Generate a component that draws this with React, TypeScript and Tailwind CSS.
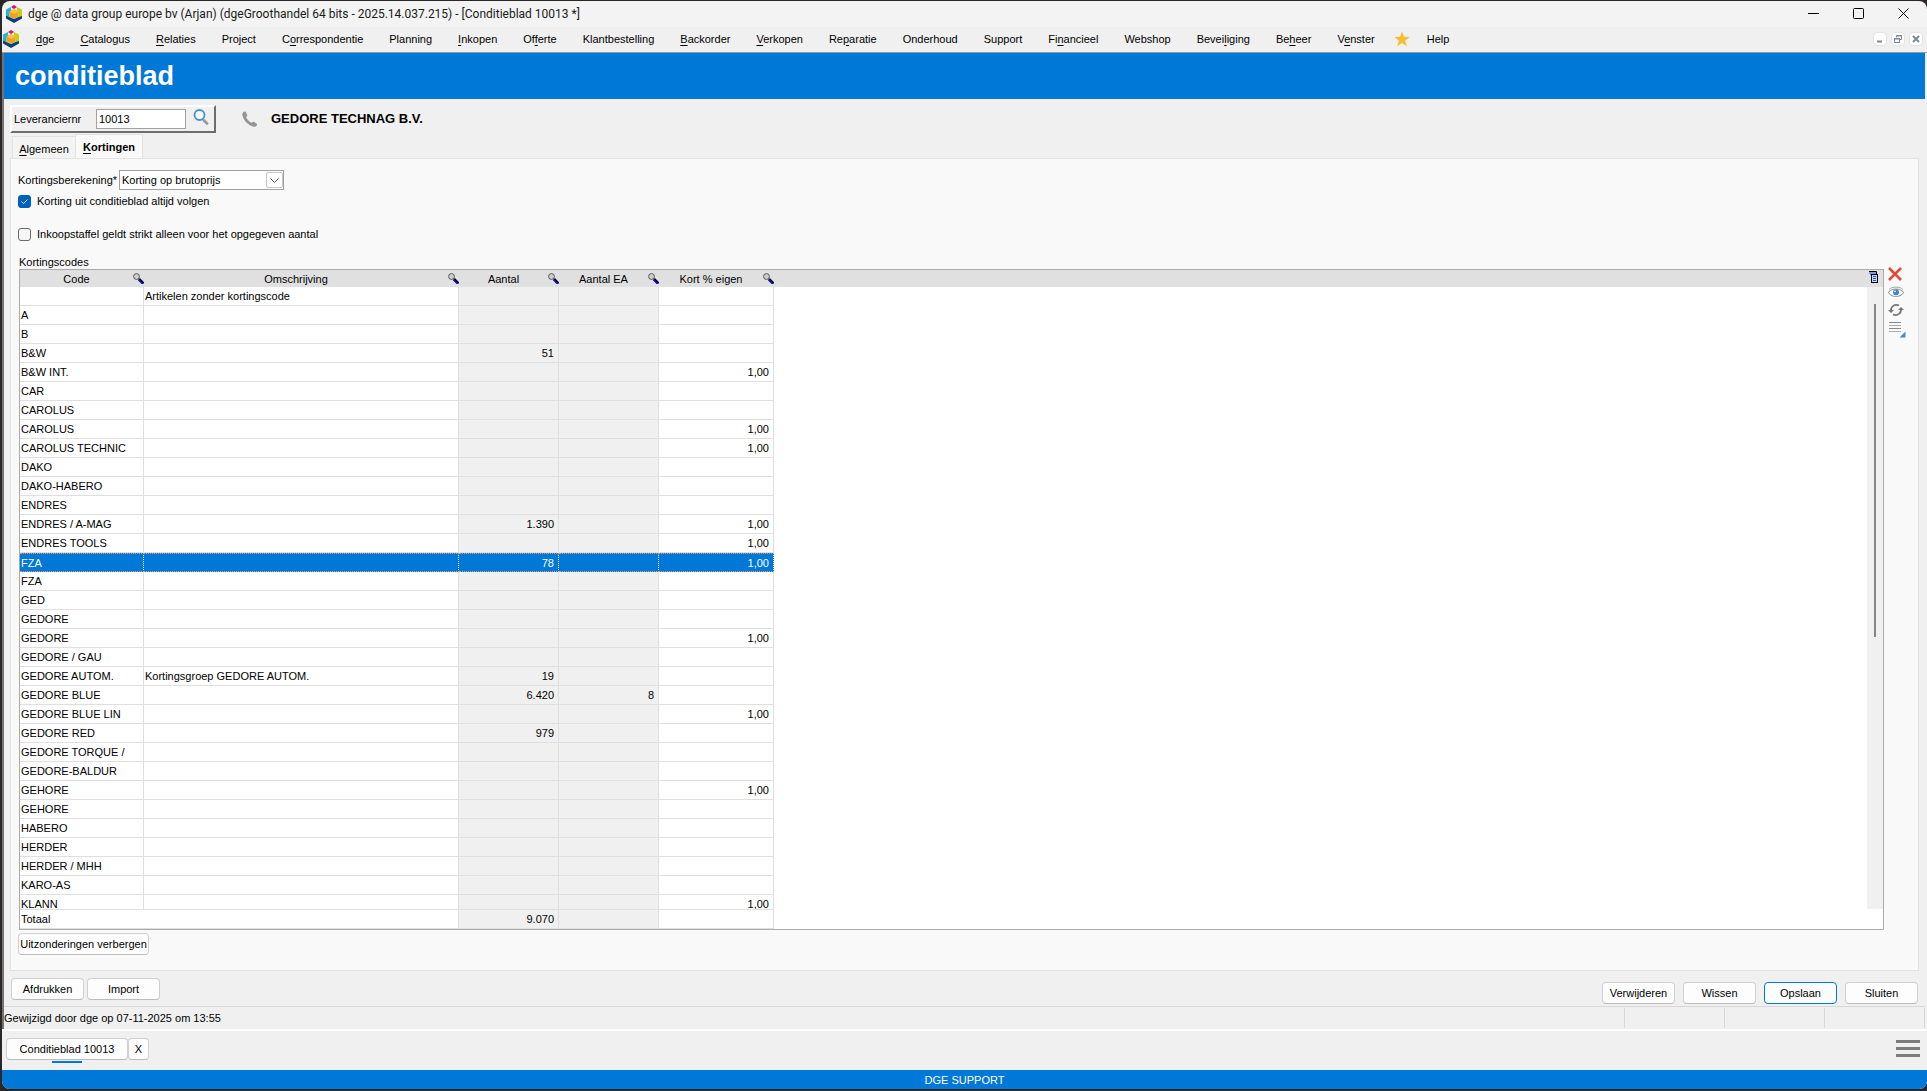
import { useState, type ReactNode } from "react";

// ─── Data ────────────────────────────────────────────────────────────────────

interface MenuEntry {
  label: string;
  at?: number; // index of the underlined shortcut letter
}

const MENU: MenuEntry[] = [
  { label: "dge", at: 0 },
  { label: "Catalogus", at: 0 },
  { label: "Relaties", at: 0 },
  { label: "Project" },
  { label: "Correspondentie", at: 1 },
  { label: "Planning" },
  { label: "Inkopen", at: 0 },
  { label: "Offerte", at: 2 },
  { label: "Klantbestelling" },
  { label: "Backorder", at: 0 },
  { label: "Verkopen", at: 0 },
  { label: "Reparatie", at: 2 },
  { label: "Onderhoud" },
  { label: "Support" },
  { label: "Financieel", at: 2 },
  { label: "Webshop" },
  { label: "Beveiliging", at: 5 },
  { label: "Beheer", at: 2 },
  { label: "Venster", at: 1 },
];

interface Row {
  code: string;
  desc?: string;
  qty?: string;
  qtyEa?: string;
  pct?: string;
}

const ROWS: Row[] = [
  { code: "", desc: "Artikelen zonder kortingscode" },
  { code: "A" },
  { code: "B" },
  { code: "B&W", qty: "51" },
  { code: "B&W INT.", pct: "1,00" },
  { code: "CAR" },
  { code: "CAROLUS" },
  { code: "CAROLUS", pct: "1,00" },
  { code: "CAROLUS TECHNIC", pct: "1,00" },
  { code: "DAKO" },
  { code: "DAKO-HABERO" },
  { code: "ENDRES" },
  { code: "ENDRES / A-MAG", qty: "1.390", pct: "1,00" },
  { code: "ENDRES TOOLS", pct: "1,00" },
  { code: "FZA", qty: "78", pct: "1,00" },
  { code: "FZA" },
  { code: "GED" },
  { code: "GEDORE" },
  { code: "GEDORE", pct: "1,00" },
  { code: "GEDORE / GAU" },
  { code: "GEDORE AUTOM.", desc: "Kortingsgroep GEDORE AUTOM.", qty: "19" },
  { code: "GEDORE BLUE", qty: "6.420", qtyEa: "8" },
  { code: "GEDORE BLUE LIN", pct: "1,00" },
  { code: "GEDORE RED", qty: "979" },
  { code: "GEDORE TORQUE /" },
  { code: "GEDORE-BALDUR" },
  { code: "GEHORE", pct: "1,00" },
  { code: "GEHORE" },
  { code: "HABERO" },
  { code: "HERDER" },
  { code: "HERDER / MHH" },
  { code: "KARO-AS" },
  { code: "KLANN", pct: "1,00" },
];

const COLUMNS = ["Code", "Omschrijving", "Aantal", "Aantal EA", "Kort % eigen"];

// ─── Icons ───────────────────────────────────────────────────────────────────

function Logo() {
  return (
    <svg viewBox="0 0 16 18" className="h-[18px] w-4 shrink-0" aria-hidden="true">
      <path d="M0 4.5 5 2v4L3.5 8v4L0 10.5z" fill="#1db4e4" />
      <path d="M5 2 8 0l3 2-3 2z" fill="#d5127e" />
      <path d="M11 2l5 2.500V11l-3.500 1V7L11 5.500z" fill="#c5cf10" />
      <path d="M0 10.500 3.500 12 8 14l4.500-2L16 11v2.500L8 18 0 13.500z" fill="#0a3f7a" />
      <path d="M8 4l4.500 2.500v5L8 14l-4.500-2.500v-5z" fill="#f2a01e" />
      <path d="M8 4l4.500 2.500L8 9 3.500 6.500z" fill="#fbc43a" />
    </svg>
  );
}

function FilterIcon() {
  return (
    <svg viewBox="0 0 11 11" className="h-[11px] w-[11px] shrink-0" aria-hidden="true">
      <path d="M6 6l4.500 4.500" stroke="#000" strokeWidth="2.600" />
      <path d="M5.500 6.800l4.300 4.200" stroke="#1111ee" strokeWidth="1.600" />
      <circle cx="3.500" cy="3.500" r="2.900" fill="#d0d0d0" stroke="#555" strokeWidth="1" />
    </svg>
  );
}

function SearchIcon() {
  return (
    <svg viewBox="0 0 16 16" className="size-4" aria-hidden="true">
      <path d="M11 11.500l3 3" stroke="#9a9a9a" strokeWidth="2.800" strokeLinecap="round" />
      <circle cx="6.500" cy="6" r="5" fill="#f6fafd" stroke="#4a8fc7" strokeWidth="1.800" />
    </svg>
  );
}

function PhoneIcon() {
  return (
    <svg viewBox="0 0 16 16" className="size-4" fill="#959595" aria-hidden="true">
      <path d="M1 1.500C1.800.6 3 .2 3.600.8L5.300 4c.2.500-.1 1-.7 1.500-.5.400-.5.700-.2 1.200 1.200 2.100 2.600 3.600 4.700 4.900.5.300.8.200 1.200-.3.500-.600 1-.8 1.500-.5l3 2c.6.500.1 1.600-.8 2.400-1 .8-2.600.8-4.600-.1C5.600 13.300 2.100 9.600.8 5.800.2 4 .2 2.500 1 1.500z" />
    </svg>
  );
}

function CopyIcon() {
  return (
    <svg viewBox="0 0 10 12" className="h-3 w-[10px]" aria-hidden="true">
      <path d="M0 .5h7.500V3" fill="none" stroke="#000" />
      <path d="M0 2h7M1 3.500h1" stroke="#6c80e8" strokeWidth="1.500" />
      <rect x="2.500" y="3.500" width="6" height="8" fill="#c9d4ff" stroke="#000" />
      <path d="M4 5.500h3M4 7.500h3M4 9.500h3" stroke="#3344cc" />
    </svg>
  );
}

function DeleteIcon() {
  return (
    <svg viewBox="0 0 14 14" className="size-[14px]" aria-hidden="true">
      <path d="M1 1l12 12M13 1L1 13" stroke="#e04a3a" strokeWidth="2.600" />
    </svg>
  );
}

function EyeIcon() {
  return (
    <svg viewBox="0 0 16 12" className="h-3 w-4" aria-hidden="true">
      <path d="M.5 6.500C4 1.800 12 1.800 15.500 6.500 12 11.800 4 11.800.5 6.500z" fill="#fff" stroke="#9a9a9a" strokeWidth="1.100" />
      <path d="M1 3.500C4 .3 12 .3 15 3.500" fill="none" stroke="#a5a5a5" />
      <circle cx="8" cy="6.300" r="3" fill="#3c85c2" />
      <circle cx="7" cy="5.300" r=".9" fill="#fff" />
    </svg>
  );
}

function RefreshIcon() {
  return (
    <svg viewBox="0 0 16 14" className="h-[14px] w-4" fill="none" aria-hidden="true">
      <path d="M3 8C2.500 4 6 .8 11 2.400" stroke="#777" strokeWidth="1.700" />
      <path d="M13 6c.5 4-3 7.200-8 5.600" stroke="#777" strokeWidth="1.700" />
      <path d="M0 7h6L3 10z" fill="#777" />
      <path d="M10 7h6l-3-3z" fill="#777" />
    </svg>
  );
}

function ListIcon() {
  return (
    <svg viewBox="0 0 18 16" className="h-4 w-[18px]" aria-hidden="true">
      <path d="M1 .5h12M1 6.500h12" stroke="#8a8a8a" />
      <path d="M1 3.500h12M1 9.500h12" stroke="#aaa" />
      <path d="M17.500 9.500V15.500H11.500z" fill="#4a8ac0" />
    </svg>
  );
}

// ─── Small parts ─────────────────────────────────────────────────────────────

function Mnemonic({ label, at }: MenuEntry) {
  if (at === undefined) return <>{label}</>;
  return (
    <>
      {label.slice(0, at)}
      <u className="underline-offset-2">{label[at]}</u>
      {label.slice(at + 1)}
    </>
  );
}

function PushButton({ children, primary }: { children: ReactNode; primary?: boolean }) {
  return (
    <button
      type="button"
      className={`h-[22px] w-[73px] rounded border bg-[#fdfdfd] ${
        primary ? "border-[#0078d7]" : "border-[#d0d0d0] border-b-[#bcbcbc]"
      }`}
    >
      {children}
    </button>
  );
}

function CheckBox({ label, initial = false }: { label: string; initial?: boolean }) {
  const [checked, setChecked] = useState(initial);
  return (
    <label className="flex w-fit items-center gap-[6px]">
      <span className="relative size-[13px]">
        <input
          type="checkbox"
          checked={checked}
          onChange={(e) => setChecked(e.target.checked)}
          className="block size-[13px] appearance-none rounded-[3px] border border-[#6b6b6b] bg-[#f6f6f6] checked:border-[#005fb8] checked:bg-[#005fb8]"
        />
        {checked && (
          <svg viewBox="0 0 13 13" className="pointer-events-none absolute inset-0 size-[13px]" aria-hidden="true">
            <path d="M3.500 6.500l2 2.200 4-4.200" fill="none" stroke="#cfe3f5" strokeWidth="1" />
          </svg>
        )}
      </span>
      {label}
    </label>
  );
}

function Columns() {
  return (
    <colgroup>
      <col className="w-[124px]" />
      <col className="w-[315px]" />
      <col className="w-[100px]" />
      <col className="w-[100px]" />
      <col className="w-[115px]" />
      <col />
    </colgroup>
  );
}

// ─── Window chrome ───────────────────────────────────────────────────────────

function TitleBar() {
  return (
    <header className="flex h-[26px] items-center gap-[6px] rounded-t-lg bg-[#f3f3f3] pr-[18px] pb-px pl-1">
      <Logo />
      <h1 className="flex-1 font-[Roboto] text-[12px] text-[#1a1a1a]">
        dge @ data group europe bv (Arjan) (dgeGroothandel 64 bits - 2025.14.037.215) - [Conditieblad 10013 *]
      </h1>
      <div className="flex gap-[34px]">
        <button type="button" aria-label="Minimaliseren">
          <svg viewBox="0 0 11 11" className="size-[11px]" fill="none" stroke="#000">
            <path d="M0 5.500h11" />
          </svg>
        </button>
        <button type="button" aria-label="Maximaliseren">
          <svg viewBox="0 0 11 11" className="size-[11px]" fill="none" stroke="#000">
            <rect x=".5" y=".5" width="10" height="10" rx="1" />
          </svg>
        </button>
        <button type="button" aria-label="Afsluiten">
          <svg viewBox="0 0 11 11" className="size-[11px]" fill="none" stroke="#000">
            <path d="M.5.5l10 10M10.500.5l-10 10" />
          </svg>
        </button>
      </div>
    </header>
  );
}

function MenuBar() {
  const mdi = "flex size-[14px] items-center justify-center rounded-sm border border-[#e2e2e2] bg-white";
  return (
    <nav className="flex h-[26px] items-center border-b border-[#9a9a9a] pr-1 pb-[2px] pl-px">
      <Logo />
      <div className="flex items-center gap-[26px] pl-[17px] whitespace-nowrap">
        {MENU.map((entry) => (
          <button key={entry.label} type="button">
            <Mnemonic {...entry} />
          </button>
        ))}
      </div>
      <div className="flex flex-1 items-center gap-[17px] pl-[19px]">
        <svg viewBox="0 0 16 16" className="size-4" aria-hidden="true">
          <path d="M8 .5l2 5.300 5.700.2-4.500 3.500 1.600 5.700L8 12l-4.800 3.200 1.600-5.700L.3 6 6 5.800z" fill="#f7bd33" />
        </svg>
        <button type="button">Help</button>
      </div>
      <div className="flex gap-[4px]">
        <button type="button" aria-label="Venster minimaliseren" className={mdi}>
          <svg viewBox="0 0 8 8" className="size-2"><path d="M1 6.500h5" stroke="#7a8896" strokeWidth="2" /></svg>
        </button>
        <button type="button" aria-label="Venster herstellen" className={mdi}>
          <svg viewBox="0 0 8 8" className="size-2" fill="none" stroke="#7a8896">
            <path d="M2.500 2.500V.5h5v4h-2M2 1h6M0 4h6" />
            <rect x=".5" y="3.500" width="5" height="4" />
          </svg>
        </button>
        <button type="button" aria-label="Venster sluiten" className={mdi}>
          <svg viewBox="0 0 8 8" className="size-2"><path d="M1 1l6 6M7 1L1 7" stroke="#7a8896" strokeWidth="2" /></svg>
        </button>
      </div>
    </nav>
  );
}

// ─── Discount table ──────────────────────────────────────────────────────────

function DiscountTable() {
  const [selected, setSelected] = useState(14);

  return (
    <div className="flex min-h-0 flex-1 flex-col border border-[#a9a9ae] bg-white">
      <div className="flex min-h-0 flex-1">
        <div className="min-w-0 flex-1 overflow-hidden">
          <table className="w-full table-fixed border-separate border-spacing-0" aria-labelledby="codes-title">
            <Columns />
            <thead>
              <tr className="bg-[#e0e0e0]">
                {COLUMNS.map((name) => (
                  <th key={name} className="h-[17px] p-0 font-normal">
                    <span className="flex items-center">
                      <span className="flex-1">{name}</span>
                      <FilterIcon />
                    </span>
                  </th>
                ))}
                <td />
              </tr>
            </thead>
            <tbody>
              {ROWS.map((row, i) => {
                const active = i === selected;
                const cell = active
                  ? "h-[19px] border-y border-r border-y-[#e39a63] border-r-white border-dotted bg-[#0078d7] p-0 text-white"
                  : "h-[19px] border-b border-r border-[#dfdfdf] p-0";
                const shade = active ? "" : "bg-[#f0f0f0]";
                return (
                  <tr key={i} onClick={() => setSelected(i)}>
                    <td className={`${cell} pl-px whitespace-nowrap`}>{row.code}</td>
                    <td className={`${cell} pl-px`}>{row.desc}</td>
                    <td className={`${cell} ${shade} pr-1 text-right`}>{row.qty}</td>
                    <td className={`${cell} ${shade} pr-1 text-right`}>{row.qtyEa}</td>
                    <td className={`${cell} pr-1 text-right`}>{row.pct}</td>
                    <td />
                  </tr>
                );
              })}
            </tbody>
          </table>
        </div>

        {/* Scroll bar */}
        <div className="flex w-4 flex-col bg-[#f0f0f0]">
          <div className="h-[17px] bg-[#e0e0e0] pt-px pl-[2px]">
            <button type="button" aria-label="Kolommen" className="block">
              <CopyIcon />
            </button>
          </div>
          <div className="flex-1 pt-[17px] pl-[7px]">
            <div className="h-[55%] w-[2px] bg-[#858585]" />
          </div>
        </div>
      </div>

      {/* Totals stay put below the scrolling rows */}
      <table className="w-full table-fixed border-separate border-spacing-0" aria-label="Totaal">
        <Columns />
        <tbody>
          <tr>
            <td colSpan={2} className="h-5 border-y border-r border-[#dfdfdf] p-0 pl-px">Totaal</td>
            <td className="border-y border-r border-[#dfdfdf] bg-[#f0f0f0] p-0 pr-1 text-right">9.070</td>
            <td className="border-y border-r border-[#dfdfdf] bg-[#f0f0f0] p-0" />
            <td className="border-y border-r border-[#dfdfdf] p-0" />
            <td />
          </tr>
        </tbody>
      </table>
    </div>
  );
}

// ─── Page ────────────────────────────────────────────────────────────────────

export default function App() {
  const [supplier, setSupplier] = useState("10013");

  return (
    <div className="flex h-screen flex-col bg-[#2a2728] pt-px pb-[2px] pl-[2px] font-['Liberation_Sans',sans-serif] text-[11px] leading-[14px] text-black">
      <TitleBar />

      <div className="flex min-h-0 flex-1 flex-col rounded-b-lg bg-[#f0f0f0]">
        <MenuBar />

        <main className="mr-[2px] flex min-h-0 flex-1 flex-col border-l-2 border-[#77716f]">
          <h2 className="flex h-[46px] items-center bg-[#0078d7] pl-[11px] text-[27px] font-bold text-white">
            conditieblad
          </h2>

          {/* Supplier search */}
          <div className="flex items-center gap-[26px] pt-[6px] pl-[6px]">
            <div className="flex h-[28px] w-[206px] items-center border-2 border-t-white border-l-white border-r-[#6d6d6d] border-b-[#6d6d6d] pl-[2px]">
              <label htmlFor="supplier" className="w-[82px]">Leveranciernr</label>
              <input
                id="supplier"
                value={supplier}
                onChange={(e) => setSupplier(e.target.value)}
                className="h-5 w-[90px] border border-[#a0a0a5] bg-white px-[2px]"
              />
              <button type="button" aria-label="Zoeken" className="pb-1 pl-[7px]">
                <SearchIcon />
              </button>
            </div>
            <div className="flex items-center gap-[13px]">
              <PhoneIcon />
              <strong className="text-[13px]">GEDORE TECHNAG B.V.</strong>
            </div>
          </div>

          {/* Tabs */}
          <div role="tablist" className="flex items-end pt-px pl-2">
            <button type="button" role="tab" aria-selected="false" className="h-[22px] w-[63px] border border-r-0 border-b-0 border-[#e2e2e2] bg-[#f3f3f3] pt-[2px]">
              <Mnemonic label="Algemeen" at={0} />
            </button>
            <button type="button" role="tab" aria-selected="true" className="-mb-px h-[25px] w-[68px] border border-b-0 border-[#e2e2e2] bg-[#f9f9f9] font-bold">
              <Mnemonic label="Kortingen" at={0} />
            </button>
          </div>

          {/* Tab page */}
          <section className="mr-[6px] ml-[6px] flex min-h-0 flex-1 flex-col border border-[#e2e2e2] bg-[#f9f9f9] pt-[11px] pb-[15px] pl-[7px]">
            <div className="flex items-center">
              <label htmlFor="calc" className="w-[101px]">Kortingsberekening*</label>
              <div className="relative">
                <select id="calc" className="block h-5 w-[165px] appearance-none border border-[#a0a0a5] bg-white pl-[2px]">
                  <option>Korting op brutoprijs</option>
                </select>
                <span className="pointer-events-none absolute top-[2px] right-px flex h-4 w-[17px] items-center justify-center rounded-[2px] border border-[#c4c4c4] bg-white">
                  <svg viewBox="0 0 9 5" className="h-[5px] w-[9px]" fill="none" stroke="#555">
                    <path d="M.5.5l4 4 4-4" />
                  </svg>
                </span>
              </div>
            </div>

            <div className="flex flex-col gap-[19px] pt-1">
              <CheckBox label="Korting uit conditieblad altijd volgen" initial />
              <CheckBox label="Inkoopstaffel geldt strikt alleen voor het opgegeven aantal" />
            </div>

            <h3 id="codes-title" className="pt-[14px] pl-px">Kortingscodes</h3>

            <div className="flex min-h-0 flex-1 pl-px">
              <DiscountTable />
              <div className="-mt-[2px] flex w-[34px] flex-col items-start gap-[5px] pl-1">
                <button type="button" aria-label="Verwijderen"><DeleteIcon /></button>
                <button type="button" aria-label="Bekijken"><EyeIcon /></button>
                <button type="button" aria-label="Vernieuwen"><RefreshIcon /></button>
                <button type="button" aria-label="Lijst"><ListIcon /></button>
              </div>
            </div>

            <button type="button" className="mt-[3px] h-[22px] w-[131px] rounded border border-[#d0d0d0] border-b-[#bcbcbc] bg-[#fdfdfd] whitespace-nowrap">
              Uitzonderingen verbergen
            </button>
          </section>

          {/* Actions */}
          <div className="flex h-[35px] items-start justify-between pt-[7px] pr-[7px] pl-[7px]">
            <div className="flex gap-[3px]">
              <PushButton>Afdrukken</PushButton>
              <PushButton>Import</PushButton>
            </div>
            <div className="flex gap-2 pt-1">
              <PushButton>Verwijderen</PushButton>
              <PushButton>Wissen</PushButton>
              <PushButton primary>Opslaan</PushButton>
              <PushButton>Sluiten</PushButton>
            </div>
          </div>

          {/* Status bar */}
          <div className="flex h-[23px] items-center justify-between border-t border-[#d7d7d7]">
            <p>Gewijzigd door dge op 07-11-2025 om 13:55</p>
            <div className="flex h-5">
              <span className="w-[100px] border-l border-[#d7d7d7]" />
              <span className="w-[100px] border-l border-[#d7d7d7]" />
              <span className="w-[101px] border-x border-[#d7d7d7]" />
            </div>
          </div>
        </main>

        {/* Open windows */}
        <div className="flex h-[41px] items-start justify-between border-t-2 border-white pt-[7px] pr-[7px] pl-1">
          <div className="flex">
            <div className="flex flex-col items-center gap-px">
              <button type="button" className="h-[22px] w-[122px] rounded border border-[#d0d0d0] border-b-[#bcbcbc] bg-[#fdfdfd]">
                Conditieblad 10013
              </button>
              <span className="h-[2px] w-[30px] bg-[#0078d7]" />
            </div>
            <button type="button" aria-label="Tabblad sluiten" className="h-[22px] w-[21px] rounded border border-[#d0d0d0] border-b-[#bcbcbc] bg-[#fdfdfd]">
              X
            </button>
          </div>
          <button type="button" aria-label="Menu" className="flex flex-col gap-1 pt-[2px]">
            <span className="h-[3px] w-6 bg-[#7c7c7c]" />
            <span className="h-[3px] w-6 bg-[#7c7c7c]" />
            <span className="h-[3px] w-6 bg-[#7c7c7c]" />
          </button>
        </div>

        <footer className="flex h-[19px] items-center justify-center rounded-b-lg bg-[#0078d7] text-white">
          DGE SUPPORT
        </footer>
      </div>
    </div>
  );
}
